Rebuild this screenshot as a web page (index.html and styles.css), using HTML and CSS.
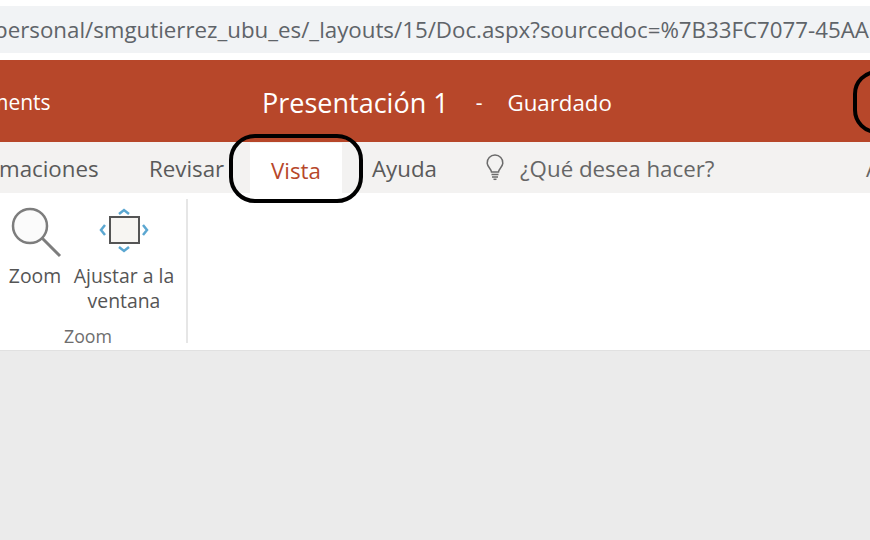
FILE: index.html
```html
<!DOCTYPE html>
<html lang="es">
<head>
    <meta charset="UTF-8">
    <title>Presentación 1</title>
    <link rel="stylesheet" href="styles.css">
</head>
<body>
    <div class="url-bar">
        <span class="url-text">personal/smgutierrez_ubu_es/_layouts/15/Doc.aspx?sourcedoc=%7B33FC7077-45AA</span>
    </div>

    <header class="title-bar">
        <span class="title-left">ments</span>
        <span class="doc-name">Presentación 1</span>
        <span class="doc-dash">-</span>
        <span class="doc-status">Guardado</span>
    </header>

    <nav class="tabs">
        <span class="tab tab-first">maciones</span>
        <span class="tab tab-revisar">Revisar</span>
        <span class="tab tab-active">Vista</span>
        <span class="tab tab-ayuda">Ayuda</span>
        <svg class="bulb" width="22" height="28" viewBox="0 0 22 28" fill="none" stroke="#6b6b6b" stroke-width="1.5">
            <path d="M7.500 19c0-3-3.800-4.600-4.300-8.600C2.700 5.600 6.500 2 11 2s8.300 3.600 7.800 8.400C18.300 14.400 14.500 16 14.500 19z"/>
            <path d="M7.500 21.500h7M8 24h6" />
            <path d="M9.500 26.300h3" />
        </svg>
        <span class="tell-me">¿Qué desea hacer?</span>
        <span class="tab-end">A</span>
    </nav>

    <section class="ribbon">
        <div class="group">
            <div class="group-items">
                <div class="tool tool-zoom">
                    <svg width="56" height="54" viewBox="0 0 56 54" fill="none" stroke="#7d7d7d">
                        <circle cx="23" cy="21" r="17" stroke-width="2.500" fill="#fbfbfb"/>
                        <path d="M35 33l18 18" stroke-width="3"/>
                    </svg>
                    <span class="tool-label">Zoom</span>
                </div>
                <div class="tool tool-fit">
                    <svg class="fit-icon" width="50" height="52" viewBox="0 0 50 52" fill="none">
                        <rect x="11" y="10" width="29" height="26" fill="#f7f5f2" stroke="#555" stroke-width="2"/>
                        <g stroke="#5ba7d1" stroke-width="2.500">
                            <path d="M20 7l5-4 5 4"/>
                            <path d="M20 40l5 4 5-4"/>
                            <path d="M6 18l-4 5 4 5"/>
                            <path d="M44 18l4 5-4 5"/>
                        </g>
                    </svg>
                    <span class="tool-label">Ajustar a la<br>ventana</span>
                </div>
            </div>
            <div class="group-name">Zoom</div>
        </div>
    </section>

    <main class="workspace"></main>

    <div class="mark mark-vista"></div>
    <div class="mark mark-corner"></div>
</body>
</html>
```

FILE: styles.css
```css
body {
    margin: 0;
    width: 870px;
    height: 540px;
    overflow: hidden;
    position: relative;
    background-color: #fff;
    font-family: "Open Sans", "Noto Sans", sans-serif;
}
.url-bar {
    margin-top: 6px;
    height: 47px;
    background-color: #f1f3f5;
    color: #5f6469;
    font-size: 22.3px;
    line-height: 47px;
    white-space: nowrap;
    overflow: hidden;
}
.url-text {
    display: inline-block;
    margin-left: -6px;
}
.title-bar {
    margin-top: 7px;
    padding-top: 2px;
    height: 80px;
    background-color: #b7472a;
    color: #fff;
    display: flex;
    align-items: center;
    white-space: nowrap;
    overflow: hidden;
}
.title-left {
    font-size: 21px;
    margin-left: -11px;
    width: 273px;
}
.doc-name {
    font-size: 27px;
}
.doc-dash {
    font-size: 21px;
    margin-left: 27px;
}
.doc-status {
    font-size: 22.3px;
    margin-left: 25px;
}
.tabs {
    height: 51px;
    padding-top: 1px;
    box-sizing: border-box;
    background-color: #f3f2f1;
    color: #5a5a5a;
    font-size: 22.3px;
    display: flex;
    align-items: center;
    white-space: nowrap;
    overflow: hidden;
}
.tabs > * {
    flex-shrink: 0;
}
.tab-first {
    margin-left: -1px;
    width: 150px;
}
.tab-revisar {
    width: 101px;
}
.tab-active {
    width: 92px;
    height: 51px;
    line-height: 55px;
    text-align: center;
    background-color: #fff;
    color: #b7472a;
}
.tab-ayuda {
    margin-left: 30px;
    width: 112px;
}
.bulb {
    margin-bottom: 2px;
}
.tell-me {
    margin-left: 14px;
    color: #666;
    width: 346px;
}
.tab-end {
    color: #666;
}
.ribbon {
    height: 157px;
    background-color: #fff;
    border-bottom: 1px solid #e1e1e1;
    display: flex;
}
.group {
    width: 186px;
    margin-top: 6px;
    margin-bottom: 7px;
    border-right: 2px solid #e6e6e6;
    display: flex;
    flex-direction: column;
}
.group-items {
    display: flex;
    height: 125px;
    padding-top: 6px;
    box-sizing: border-box;
}
.tool {
    display: flex;
    flex-direction: column;
    align-items: center;
    text-align: center;
    color: #555;
    font-size: 19.4px;
    line-height: 25px;
}
.tool-zoom {
    width: 70px;
}
.tool-fit {
    width: 102px;
    margin-left: 3px;
}
.fit-icon {
    margin-top: 2px;
}
.tool-label {
    margin-top: 4px;
}
.group-name {
    width: 176px;
    margin-top: 6px;
    text-align: center;
    color: #6e6e6e;
    font-size: 17.8px;
    line-height: 13px;
}
.workspace {
    height: 189px;
    background-color: #ebebeb;
}
.mark {
    position: absolute;
    border: 4px solid #000;
    box-sizing: border-box;
}
.mark-vista {
    left: 229px;
    top: 134px;
    width: 134px;
    height: 69px;
    border-radius: 26px;
}
.mark-corner {
    left: 853px;
    top: 70px;
    width: 70px;
    height: 64px;
    border-radius: 24px;
}
```
